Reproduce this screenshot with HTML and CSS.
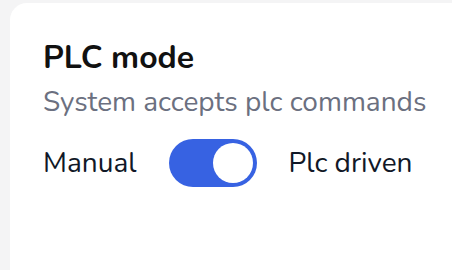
FILE: index.html
```html
<!DOCTYPE html>
<html>
<head>
<meta charset="utf-8">
<link rel="stylesheet" href="styles.css">
</head>
<body>
<div class="card">
  <h2 class="title">PLC mode</h2>
  <p class="subtitle">System accepts plc commands</p>
  <div class="row">
    <span class="label">Manual</span>
    <button class="toggle" aria-pressed="true"><span class="knob"></span></button>
    <span class="label">Plc driven</span>
  </div>
</div>
</body>
</html>
```
FILE: styles.css
```css
html, body {
  margin: 0;
  padding: 0;
  background: #f4f4f5;
  width: 452px;
  height: 270px;
  overflow: hidden;
}
body {
  font-family: "Nunito", "Inter", "Noto Sans", sans-serif;
  padding: 3px 0 0 10px;
  box-sizing: border-box;
}
.card {
  background: #ffffff;
  border-radius: 17px 0 0 0;
  height: 267px;
  padding: 35px 0 0 33px;
  box-sizing: border-box;
}
.title {
  margin: 0;
  font-size: 32px;
  font-weight: 700;
  color: #111111;
  line-height: 40px;
}
.subtitle {
  margin: 6px 0 0 0;
  font-size: 28px;
  font-weight: 400;
  color: #6b7080;
  line-height: 36px;
  white-space: nowrap;
}
.row {
  display: flex;
  align-items: center;
  gap: 32px;
  margin-top: 19px;
}
.label {
  font-size: 28px;
  line-height: 36px;
  color: #111827;
}
.toggle {
  width: 88px;
  height: 48px;
  border: none;
  border-radius: 24px;
  background: #3762e2;
  padding: 4px;
  display: flex;
  justify-content: flex-end;
  box-sizing: border-box;
}
.knob {
  width: 40px;
  height: 40px;
  border-radius: 50%;
  background: #ffffff;
  display: block;
}
```
